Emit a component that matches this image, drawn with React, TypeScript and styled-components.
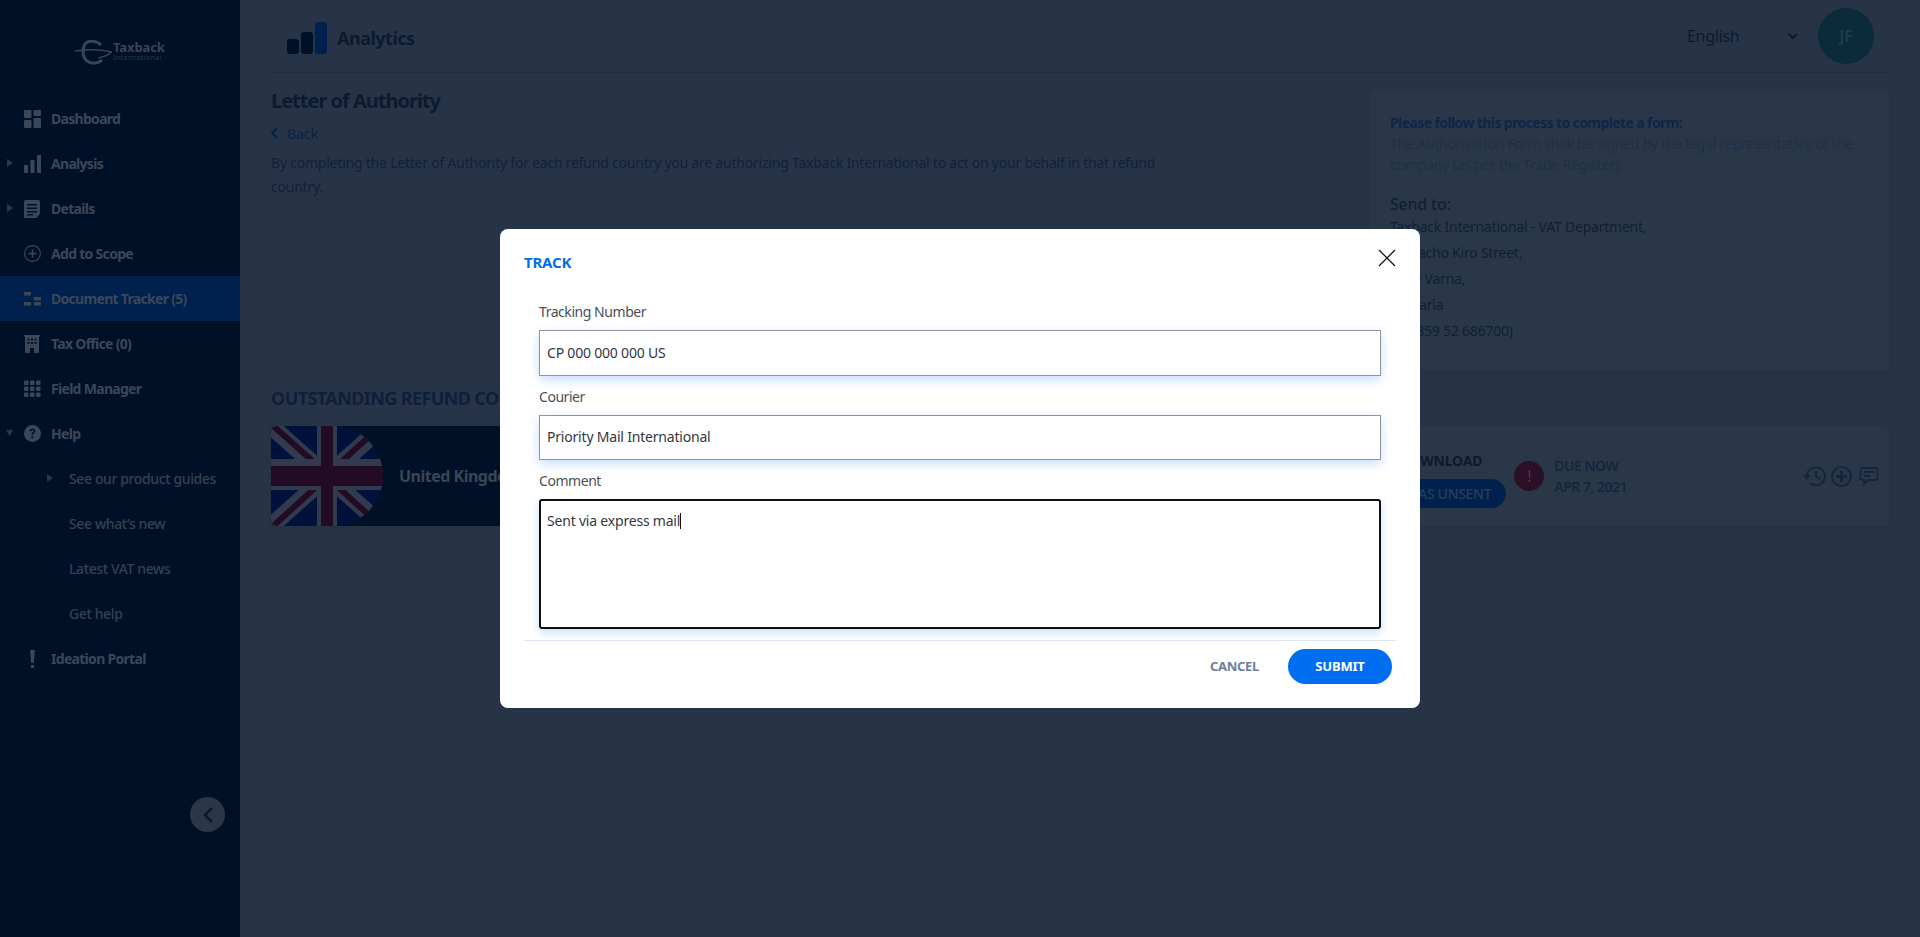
import React from 'react';
import styled, { createGlobalStyle } from 'styled-components';

const GlobalStyle = createGlobalStyle`
  * { box-sizing: border-box; }
  html, body { margin: 0; padding: 0; height: 100%; }
  body {
    background: #273447;
    font-family: "Noto Sans", "Open Sans", sans-serif;
    font-size: 14px;
    letter-spacing: -0.22px;
    color: #10203a;
    overflow: hidden;
  }
`;

const Page = styled.div`
  display: flex;
  height: 937px;
`;

/* sidebar */
const Sidebar = styled.aside`
  width: 240px;
  flex: none;
  display: flex;
  flex-direction: column;
  background: #001127;
  padding-bottom: 105px;
`;
const LogoBox = styled.div`
  height: 96px;
  display: flex;
  align-items: center;
  padding: 8px 0 0 75px;
  color: #3a4454;
`;
const LogoText = styled.div`
  display: flex;
  flex-direction: column;
  margin-left: 1px;
  margin-top: -2px;
`;
const LogoName = styled.span`
  font-size: 13px;
  font-weight: 700;
  line-height: 11px;
  letter-spacing: -0.1px;
`;
const LogoSub = styled.span`
  font-size: 7.5px;
  line-height: 8px;
  letter-spacing: 0.2px;
  color: #2a3446;
`;
const NavRow = styled.div<{ $active?: boolean; $sub?: boolean }>`
  height: 45px;
  display: flex;
  align-items: center;
  flex: none;
  background: ${p => (p.$active ? '#00214d' : 'transparent')};
  color: ${p => (p.$sub ? '#354152' : '#3b4759')};
  font-size: 14px;
  font-weight: ${p => (p.$sub ? 500 : 700)};
  letter-spacing: ${p => (p.$sub ? '-0.38px' : '-0.7px')};
`;
const CaretSlot = styled.span<{ $sub?: boolean }>`
  width: ${p => (p.$sub ? '69px' : '24px')};
  padding-left: ${p => (p.$sub ? '46px' : '6px')};
  flex: none;
  display: flex;
  align-items: center;
  margin-top: -2px;
`;
const IconSlot = styled.span`
  width: 17px;
  height: 18px;
  margin-right: 10px;
  flex: none;
  display: flex;
`;
const CollapseButton = styled.button`
  margin: auto 15px 0 auto;
  width: 35px;
  height: 35px;
  border-radius: 50%;
  border: 0;
  padding: 0;
  background: #2b3647;
  color: #0a1a30;
  display: flex;
  align-items: center;
  justify-content: center;
`;

/* main column */
const Main = styled.main`
  flex: 1;
  min-width: 0;
  padding: 0 31px;
`;
const TopBar = styled.header`
  height: 73px;
  display: flex;
  align-items: center;
  border-bottom: 1px solid #212d3f;
  padding: 0 15px 0 16px;
`;
const Brand = styled.div`
  display: flex;
  align-items: center;
  margin-top: 3px;
`;
const BrandName = styled.span`
  font-size: 18px;
  font-weight: 700;
  color: #0c1a30;
  margin-left: 10px;
  letter-spacing: -0.5px;
`;
const LanguageSelect = styled.div`
  margin-left: auto;
  width: 113px;
  display: flex;
  align-items: center;
  justify-content: space-between;
  font-size: 16px;
  color: #0c1a30;
  margin-right: 18px;
  letter-spacing: -0.3px;
  padding-right: 2px;
`;
const Avatar = styled.div`
  width: 56px;
  height: 56px;
  border-radius: 50%;
  background: #0b2b3a;
  color: #1c3f4c;
  font-size: 16px;
  font-weight: 600;
  display: flex;
  align-items: center;
  justify-content: center;
`;
const TopGrid = styled.div`
  display: grid;
  grid-template-columns: 1fr 519px;
  height: 281px;
  margin-top: 16px;
`;
const Title = styled.h1`
  margin: 0;
  font-size: 20px;
  font-weight: 700;
  line-height: 24px;
  letter-spacing: -1px;
  color: #0c1a30;
`;
const BackLink = styled.div`
  display: flex;
  align-items: center;
  gap: 9px;
  height: 20px;
  margin-top: 10px;
  font-size: 14px;
  font-weight: 500;
  color: #0d2445;
`;
const Intro = styled.p`
  margin: 8px 0 0;
  width: 900px;
  font-size: 14px;
  line-height: 24px;
  color: #10203a;
`;
const InfoCard = styled.section`
  background: #2a3748;
  border-radius: 6px;
  box-shadow: 0 1px 4px #243144;
  padding: 23px 20px;
  font-size: 14px;
  line-height: 21px;
  color: #1e3049;
`;
const InfoLead = styled.b`
  display: block;
  font-weight: 700;
  letter-spacing: -0.6px;
  color: #0f2548;
`;
const SendTo = styled.div`
  margin-top: 17px;
  font-size: 16px;
  font-weight: 500;
  line-height: 24px;
  color: #0e2038;
`;
const Address = styled.div`
  font-size: 14px;
  line-height: 26px;
  color: #0e2038;
  margin-top: -2px;
`;
const SectionTitle = styled.h2`
  margin: 16px 0;
  font-size: 18px;
  font-weight: 700;
  line-height: 24px;
  letter-spacing: -0.6px;
  color: #0e1f3a;
  white-space: nowrap;
`;
const CountryRow = styled.section`
  height: 100px;
  display: flex;
  align-items: center;
  background: #2a3748;
  border-radius: 6px;
  box-shadow: 0 1px 4px #243144;
  padding-right: 9px;
`;
const CountryLead = styled.div`
  width: 500px;
  align-self: stretch;
  display: flex;
  align-items: center;
  background: #001127;
  border-radius: 6px 0 0 6px;
`;
const Flag = styled.svg`
  width: 112px;
  height: 100px;
  flex: none;
  border-radius: 6px 50px 50px 6px;
`;
const CountryName = styled.span`
  margin-left: 16px;
  font-size: 16px;
  font-weight: 700;
  letter-spacing: -0.5px;
  color: #3a4555;
`;
const DownloadBlock = styled.div`
  margin-left: auto;
  margin-top: 7px;
  display: flex;
  flex-direction: column;
  align-items: center;
  font-size: 14px;
  font-weight: 700;
  letter-spacing: -0.2px;
  line-height: 20px;
  color: #0c1a30;
`;
const DownloadLabel = styled.span`
  align-self: flex-end;
  margin: 0 24px 8px 0;
`;
const UnsentPill = styled.div`
  height: 29px;
  padding: 0 15px 0 30px;
  border-radius: 15px;
  background: #00214d;
  color: #2c3d58;
  font-size: 14px;
  font-weight: 500;
  letter-spacing: -0.3px;
  display: flex;
  align-items: center;
`;
const AlertDot = styled.div`
  width: 30px;
  height: 30px;
  flex: none;
  margin: 0 10px 0 8px;
  border-radius: 50%;
  background: #2a0f27;
  color: #5c3346;
  font-size: 16px;
  display: flex;
  align-items: center;
  justify-content: center;
`;
const DueBlock = styled.div`
  font-size: 14px;
  font-weight: 600;
  line-height: 21px;
  letter-spacing: -0.5px;
  color: #14263f;
`;
const RowIcons = styled.div`
  margin-left: 175px;
  display: flex;
  align-items: center;
  gap: 5px;
  color: #14263f;
`;

/* modal */
const Overlay = styled.div`
  position: fixed;
  inset: 0;
  display: flex;
  align-items: center;
  justify-content: center;
`;
const Modal = styled.div`
  width: 920px;
  height: 479px;
  background: #fff;
  border-radius: 8px;
  padding: 0 24px;
`;
const ModalHead = styled.div`
  height: 73px;
  display: flex;
  justify-content: space-between;
  padding-top: 22px;
`;
const ModalTitle = styled.h3`
  margin: 0;
  font-size: 15px;
  font-weight: 700;
  line-height: 22px;
  letter-spacing: -0.2px;
  color: #006ef0;
`;
const CloseButton = styled.button`
  border: 0;
  background: none;
  padding: 0;
  width: 18px;
  height: 18px;
  margin: -2px 0 0;
  color: #111;
  display: flex;
`;
const Fields = styled.div`
  padding: 0 15px;
`;
const FieldLabel = styled.label`
  display: block;
  height: 20px;
  margin-bottom: 8px;
  font-size: 14px;
  line-height: 20px;
  letter-spacing: -0.45px;
  color: #4a4f57;
`;
const TextInput = styled.input<{ $h: number }>`
  display: block;
  width: 100%;
  height: ${p => p.$h}px;
  margin-bottom: 11px;
  padding: 0 7px 2px;
  border: 1px solid #8f959e;
  border-radius: 0;
  outline: 0;
  background: #fff;
  font: inherit;
  font-size: 14px;
  letter-spacing: -0.2px;
  color: #33383f;
  box-shadow: 0 4px 10px rgba(0, 110, 240, 0.22);
`;
const CommentBox = styled.div`
  height: 130px;
  margin-bottom: 11px;
  padding: 10px 6px;
  border: 2px solid #111;
  border-radius: 3px;
  font-size: 14px;
  line-height: 20px;
  letter-spacing: -0.2px;
  color: #33383f;
  box-shadow: 0 4px 10px rgba(0, 110, 240, 0.22);
`;
const Caret = styled.span`
  display: inline-block;
  width: 1px;
  height: 16px;
  vertical-align: -3px;
  background: #111;
`;
const ModalFoot = styled.div`
  border-top: 1px solid #dce3f0;
  padding: 8px 4px 0 0;
  display: flex;
  justify-content: flex-end;
  align-items: center;
  gap: 29px;
`;
const CancelButton = styled.button`
  border: 0;
  background: none;
  padding: 0 0 2px;
  font: inherit;
  font-size: 13px;
  font-weight: 700;
  letter-spacing: -0.3px;
  color: #6b809c;
`;
const SubmitButton = styled.button`
  width: 104px;
  height: 35px;
  border: 0;
  padding: 0 0 2px;
  border-radius: 18px;
  background: #006ef0;
  font: inherit;
  font-size: 13px;
  font-weight: 700;
  letter-spacing: -0.2px;
  color: #fff;
`;

const Triangle = ({ down }: { down?: boolean }) => (
  <svg width="8" height="8" viewBox="0 0 8 8" fill="#2c3848">
    <path d={down ? 'M0 1h7L3.5 7z' : 'M1 0l6 4-6 4z'} />
  </svg>
);

const icons: Record<string, React.ReactNode> = {
  dashboard: (
    <>
      <rect x="0" y="0" width="7.5" height="8" rx="1" />
      <rect x="9.5" y="0" width="7.5" height="6" rx="1" />
      <rect x="0" y="10" width="7.5" height="8" rx="1" />
      <rect x="9.5" y="8" width="7.5" height="10" rx="1" />
    </>
  ),
  analysis: (
    <>
      <rect x="0" y="10" width="4" height="8" />
      <rect x="6.5" y="5" width="4" height="13" />
      <rect x="13" y="0" width="4" height="18" />
    </>
  ),
  details: (
    <path
      fillRule="evenodd"
      d="M1.500 0h13A1.500 1.500 0 0 1 16 1.500V14l-4 4.500H1.500A1.500 1.500 0 0 1 0 17V1.500A1.500 1.500 0 0 1 1.500 0zM3 4v1.500h10V4zm0 3.500V9h10V7.500zM3 11v1.500h10V11zm0 3v1.500h6V14z"
    />
  ),
  scope: (
    <path
      fillRule="evenodd"
      d="M8.500 0a8.500 8.500 0 1 1 0 17 8.500 8.500 0 0 1 0-17zm0 1.200a7.300 7.300 0 1 0 0 14.600 7.300 7.300 0 0 0 0-14.600zM7.700 4.500h1.600v3.200h3.200v1.600H9.300v3.200H7.700V9.300H4.500V7.700h3.200z"
    />
  ),
  tracker: (
    <>
      <rect x="0" y="2" width="7" height="3.500" />
      <rect x="0" y="12" width="7" height="3.500" />
      <rect x="10" y="7" width="7" height="3.500" />
      <rect x="10" y="12" width="7" height="3.500" />
    </>
  ),
  office: (
    <path
      fillRule="evenodd"
      d="M0 0h16v1.500h-1V18H10v-5H6v5H1V1.500H0zM3.500 3.500v2h2v-2zm3.500 0v2h2v-2zm3.500 0v2h2v-2zM3.500 7v2h2V7zM7 7v2h2V7zm3.500 0v2h2V7z"
    />
  ),
  field: (
    <>
      {[0, 6, 12].map(x =>
        [0, 6, 12].map(y => <rect key={`${x}-${y}`} x={x} y={y + 0.5} width="4.500" height="4.500" rx="1" />)
      )}
    </>
  ),
  help: (
    <path
      fillRule="evenodd"
      d="M8.500 0a8.500 8.500 0 1 1 0 17 8.500 8.500 0 0 1 0-17zM8.600 3.500c-1.800 0-3 1-3.100 2.700h1.800c.1-.7.500-1.100 1.200-1.100.7 0 1.100.4 1.100 1 0 .5-.3.800-.9 1.200-.8.500-1.200 1-1.200 2v.4h1.700v-.3c0-.5.200-.8.900-1.200.8-.5 1.300-1.100 1.300-2.100 0-1.600-1.200-2.600-2.800-2.600zM7.400 11.300v1.900h1.900v-1.900z"
    />
  ),
  ideation: <path d="M6 0h5l-1.200 13H7.200zM7 15h3v3H7z" />,
};

const NavIcon = ({ name }: { name: string }) => (
  <IconSlot>
    <svg width="17" height="18" viewBox="0 0 17 18" fill="currentColor">
      {icons[name]}
    </svg>
  </IconSlot>
);

const mainNav = [
  { icon: 'dashboard', label: 'Dashboard' },
  { icon: 'analysis', label: 'Analysis', caret: true },
  { icon: 'details', label: 'Details', caret: true },
  { icon: 'scope', label: 'Add to Scope' },
  { icon: 'tracker', label: 'Document Tracker (5)', active: true },
  { icon: 'office', label: 'Tax Office (0)' },
  { icon: 'field', label: 'Field Manager' },
];
const helpNav = [
  { label: 'See our product guides', caret: true },
  { label: 'See what’s new' },
  { label: 'Latest VAT news' },
  { label: 'Get help' },
];

const UkFlag = () => (
  <Flag viewBox="0 0 112 100" preserveAspectRatio="none">
    <rect width="112" height="100" fill="#00113c" />
    <path d="M0 0L112 100M112 0L0 100" stroke="#313b4d" strokeWidth="17" />
    <path d="M0 -2L46 39M112 -2L68 38M0 102L44 62M112 102L68 62" stroke="#230b26" strokeWidth="6" />
    <rect x="46" width="20" height="100" fill="#313b4d" />
    <rect y="33" width="112" height="31" fill="#313b4d" />
    <rect x="50" width="12" height="100" fill="#230b26" />
    <rect y="40" width="112" height="20" fill="#230b26" />
  </Flag>
);

export default function App() {
  return (
    <>
      <GlobalStyle />
      <Page>
        <Sidebar>
          <LogoBox>
            <svg width="37" height="26" viewBox="0 0 37 26" fill="none" stroke="currentColor">
              <path d="M26 6C23 2 14 1 11 4 7 8 7 18 12 22c4 3 11 3 15-1" strokeWidth="3" />
              <path d="M0 12c10-1.500 24-2 36.500 1-3 3-8 5-13 6" strokeWidth="1.500" />
            </svg>
            <LogoText>
              <LogoName>Taxback</LogoName>
              <LogoSub>International</LogoSub>
            </LogoText>
          </LogoBox>
          {mainNav.map(item => (
            <NavRow key={item.label} $active={item.active}>
              <CaretSlot>{item.caret && <Triangle />}</CaretSlot>
              <NavIcon name={item.icon} />
              {item.label}
            </NavRow>
          ))}
          <NavRow>
            <CaretSlot>
              <Triangle down />
            </CaretSlot>
            <NavIcon name="help" />
            Help
          </NavRow>
          {helpNav.map(item => (
            <NavRow key={item.label} $sub>
              <CaretSlot $sub>{item.caret && <Triangle />}</CaretSlot>
              {item.label}
            </NavRow>
          ))}
          <NavRow>
            <CaretSlot />
            <NavIcon name="ideation" />
            Ideation Portal
          </NavRow>
          <CollapseButton>
            <svg width="14" height="18" viewBox="0 0 14 18" fill="none" stroke="currentColor" strokeWidth="2.500">
              <path d="M11 2L4 9l7 7" />
            </svg>
          </CollapseButton>
        </Sidebar>
        <Main>
          <TopBar>
            <Brand>
              <svg width="40" height="32" viewBox="0 0 40 32">
                <rect x="0" y="17" width="12" height="15" rx="3" fill="#001127" />
                <rect x="14" y="10" width="12" height="22" rx="3" fill="#001127" />
                <rect x="28" y="0" width="12" height="32" rx="3" fill="#00214d" />
              </svg>
              <BrandName>Analytics</BrandName>
            </Brand>
            <LanguageSelect>
              English
              <svg width="10" height="7" viewBox="0 0 10 7" fill="none" stroke="#0c1a30" strokeWidth="2">
                <path d="M1 1l4 4 4-4" />
              </svg>
            </LanguageSelect>
            <Avatar>JF</Avatar>
          </TopBar>
          <TopGrid>
            <div>
              <Title>Letter of Authority</Title>
              <BackLink>
                <svg width="7" height="12" viewBox="0 0 7 12" fill="none" stroke="#00214d" strokeWidth="2">
                  <path d="M6 1L1 6l5 5" />
                </svg>
                Back
              </BackLink>
              <Intro>
                By completing the Letter of Authority for each refund country you are authorizing Taxback International
                to act on your behalf in that refund country.
              </Intro>
            </div>
            <InfoCard>
              <InfoLead>Please follow this process to complete a form:</InfoLead>
              The Authorisation Form shall be signed by the legal representative of the company (as per the Trade
              Register).
              <SendTo>Send to:</SendTo>
              <Address>
                Taxback International - VAT Department,
                <br />
                28 Bacho Kiro Street,
                <br />
                9000 Varna,
                <br />
                Bulgaria
                <br />
                (T: +359 52 686700)
              </Address>
            </InfoCard>
          </TopGrid>
          <SectionTitle>OUTSTANDING REFUND COUNTRIES</SectionTitle>
          <CountryRow>
            <CountryLead>
              <UkFlag />
              <CountryName>United Kingdom</CountryName>
            </CountryLead>
            <DownloadBlock>
              <DownloadLabel>DOWNLOAD</DownloadLabel>
              <UnsentPill>MARK AS UNSENT</UnsentPill>
            </DownloadBlock>
            <AlertDot>!</AlertDot>
            <DueBlock>
              DUE NOW
              <br />
              APR 7, 2021
            </DueBlock>
            <RowIcons>
              <svg width="24" height="22" viewBox="0 0 24 22" fill="none" stroke="currentColor" strokeWidth="2">
                <path d="M5 11a9 9 0 1 1 3 7M14 6v5.500l4 2.500" />
                <path d="M0.500 10h8.500L4.800 15z" fill="currentColor" stroke="none" />
              </svg>
              <svg width="21" height="21" viewBox="0 0 21 21" fill="none" stroke="currentColor" strokeWidth="2">
                <circle cx="10.500" cy="10.500" r="9.500" />
                <path d="M10.500 5v11M5 10.500h11" strokeWidth="3" />
              </svg>
              <svg width="23" height="20" viewBox="0 0 23 20" fill="none" stroke="currentColor" strokeWidth="1.800">
                <path d="M5 2h14a1.500 1.500 0 0 1 1.500 1.500v9A1.500 1.500 0 0 1 19 14h-8l-4 4v-4H5a1.500 1.500 0 0 1-1.500-1.500v-9A1.500 1.500 0 0 1 5 2zM7 6h10M7 10h6" />
              </svg>
            </RowIcons>
          </CountryRow>
        </Main>
      </Page>
      <Overlay>
        <Modal>
          <ModalHead>
            <ModalTitle>TRACK</ModalTitle>
            <CloseButton aria-label="Close">
              <svg width="18" height="18" viewBox="0 0 18 18" fill="none" stroke="currentColor" strokeWidth="1.200">
                <path d="M1 1l16 16M17 1L1 17" />
              </svg>
            </CloseButton>
          </ModalHead>
          <Fields>
            <FieldLabel>Tracking Number</FieldLabel>
            <TextInput $h={46} defaultValue="CP 000 000 000 US" />
            <FieldLabel>Courier</FieldLabel>
            <TextInput $h={45} defaultValue="Priority Mail International" />
            <FieldLabel>Comment</FieldLabel>
            <CommentBox>
              Sent via express mail
              <Caret />
            </CommentBox>
          </Fields>
          <ModalFoot>
            <CancelButton>CANCEL</CancelButton>
            <SubmitButton>SUBMIT</SubmitButton>
          </ModalFoot>
        </Modal>
      </Overlay>
    </>
  );
}
